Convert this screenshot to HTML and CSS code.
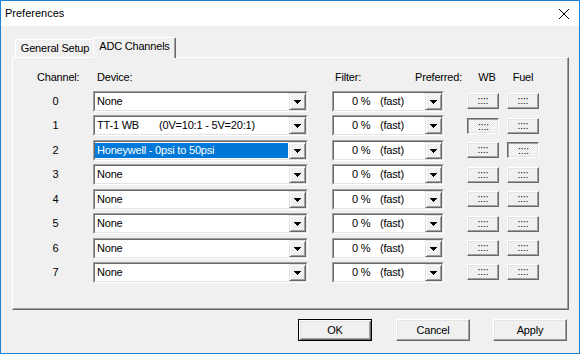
FILE: index.html
```html
<!DOCTYPE html>
<html>
<head>
<meta charset="utf-8">
<link rel="stylesheet" href="styles.css">
</head>
<body>
<div class="window">
  <div class="titlebar">
    <span class="title">Preferences</span>
    <svg class="close" width="10" height="10" viewBox="0 0 10 10"><path d="M0 0L10 10M10 0L0 10" stroke="#000" stroke-width="1"/></svg>
  </div>
  <div class="body">
    <div class="tabs">
      <div class="tab">General Setup</div>
      <div class="tab active">ADC Channels</div>
    </div>
    <div class="panel">
      <div class="grid">
        <div class="hd">Channel:</div>
        <div class="hd dev-hd">Device:</div>
        <div class="hd filt-hd"><span>Filter:</span><span class="pref">Preferred:</span></div>
        <div class="hd ctr">WB</div>
        <div class="hd ctr">Fuel</div>

        <div class="ch">0</div>
        <div class="combo dev"><div class="cin"><div class="val">None</div><div class="dd"><svg width="7" height="4"><path d="M0 0h7v1H0zM1 1h5v1H1zM2 2h3v1H2zM3 3h1v1H3z"/></svg></div></div></div>
        <div class="combo filt"><div class="cin"><div class="val"><span class="pct">0 %</span><span>(fast)</span></div><div class="dd"><svg width="7" height="4"><path d="M0 0h7v1H0zM1 1h5v1H1zM2 2h3v1H2zM3 3h1v1H3z"/></svg></div></div></div>
        <div class="pb">::::</div>
        <div class="pb">::::</div>

        <div class="ch">1</div>
        <div class="combo dev"><div class="cin"><div class="val"><span class="tt">TT-1 WB</span><span>(0V=10:1 - 5V=20:1)</span></div><div class="dd"><svg width="7" height="4"><path d="M0 0h7v1H0zM1 1h5v1H1zM2 2h3v1H2zM3 3h1v1H3z"/></svg></div></div></div>
        <div class="combo filt"><div class="cin"><div class="val"><span class="pct">0 %</span><span>(fast)</span></div><div class="dd"><svg width="7" height="4"><path d="M0 0h7v1H0zM1 1h5v1H1zM2 2h3v1H2zM3 3h1v1H3z"/></svg></div></div></div>
        <div class="pb on">::::</div>
        <div class="pb">::::</div>

        <div class="ch">2</div>
        <div class="combo dev"><div class="cin"><div class="val sel">Honeywell - 0psi to 50psi</div><div class="dd"><svg width="7" height="4"><path d="M0 0h7v1H0zM1 1h5v1H1zM2 2h3v1H2zM3 3h1v1H3z"/></svg></div></div></div>
        <div class="combo filt"><div class="cin"><div class="val"><span class="pct">0 %</span><span>(fast)</span></div><div class="dd"><svg width="7" height="4"><path d="M0 0h7v1H0zM1 1h5v1H1zM2 2h3v1H2zM3 3h1v1H3z"/></svg></div></div></div>
        <div class="pb">::::</div>
        <div class="pb on">::::</div>

        <div class="ch">3</div>
        <div class="combo dev"><div class="cin"><div class="val">None</div><div class="dd"><svg width="7" height="4"><path d="M0 0h7v1H0zM1 1h5v1H1zM2 2h3v1H2zM3 3h1v1H3z"/></svg></div></div></div>
        <div class="combo filt"><div class="cin"><div class="val"><span class="pct">0 %</span><span>(fast)</span></div><div class="dd"><svg width="7" height="4"><path d="M0 0h7v1H0zM1 1h5v1H1zM2 2h3v1H2zM3 3h1v1H3z"/></svg></div></div></div>
        <div class="pb">::::</div>
        <div class="pb">::::</div>

        <div class="ch">4</div>
        <div class="combo dev"><div class="cin"><div class="val">None</div><div class="dd"><svg width="7" height="4"><path d="M0 0h7v1H0zM1 1h5v1H1zM2 2h3v1H2zM3 3h1v1H3z"/></svg></div></div></div>
        <div class="combo filt"><div class="cin"><div class="val"><span class="pct">0 %</span><span>(fast)</span></div><div class="dd"><svg width="7" height="4"><path d="M0 0h7v1H0zM1 1h5v1H1zM2 2h3v1H2zM3 3h1v1H3z"/></svg></div></div></div>
        <div class="pb">::::</div>
        <div class="pb">::::</div>

        <div class="ch">5</div>
        <div class="combo dev"><div class="cin"><div class="val">None</div><div class="dd"><svg width="7" height="4"><path d="M0 0h7v1H0zM1 1h5v1H1zM2 2h3v1H2zM3 3h1v1H3z"/></svg></div></div></div>
        <div class="combo filt"><div class="cin"><div class="val"><span class="pct">0 %</span><span>(fast)</span></div><div class="dd"><svg width="7" height="4"><path d="M0 0h7v1H0zM1 1h5v1H1zM2 2h3v1H2zM3 3h1v1H3z"/></svg></div></div></div>
        <div class="pb">::::</div>
        <div class="pb">::::</div>

        <div class="ch">6</div>
        <div class="combo dev"><div class="cin"><div class="val">None</div><div class="dd"><svg width="7" height="4"><path d="M0 0h7v1H0zM1 1h5v1H1zM2 2h3v1H2zM3 3h1v1H3z"/></svg></div></div></div>
        <div class="combo filt"><div class="cin"><div class="val"><span class="pct">0 %</span><span>(fast)</span></div><div class="dd"><svg width="7" height="4"><path d="M0 0h7v1H0zM1 1h5v1H1zM2 2h3v1H2zM3 3h1v1H3z"/></svg></div></div></div>
        <div class="pb">::::</div>
        <div class="pb">::::</div>

        <div class="ch">7</div>
        <div class="combo dev"><div class="cin"><div class="val">None</div><div class="dd"><svg width="7" height="4"><path d="M0 0h7v1H0zM1 1h5v1H1zM2 2h3v1H2zM3 3h1v1H3z"/></svg></div></div></div>
        <div class="combo filt"><div class="cin"><div class="val"><span class="pct">0 %</span><span>(fast)</span></div><div class="dd"><svg width="7" height="4"><path d="M0 0h7v1H0zM1 1h5v1H1zM2 2h3v1H2zM3 3h1v1H3z"/></svg></div></div></div>
        <div class="pb">::::</div>
        <div class="pb">::::</div>
      </div>
    </div>
    <div class="buttons">
      <div class="btn default">OK</div>
      <div class="btn">Cancel</div>
      <div class="btn">Apply</div>
    </div>
  </div>
</div>
</body>
</html>
```

FILE: styles.css
```css
html, body {
  margin: 0;
  padding: 0;
  background: #fff;
}

body {
  font-family: "Liberation Sans", Arial, sans-serif;
  font-size: 11px;
  line-height: 13px;
  letter-spacing: -0.2px;
  color: #000;
}

.window {
  width: 580px;
  height: 354px;
  box-sizing: border-box;
  border: 1px solid #1883d7;
  background: #f0f0f0;
  display: flex;
  flex-direction: column;
}

.titlebar {
  height: 25px;
  background: #fff;
  display: flex;
  align-items: center;
  padding-left: 4px;
  flex: none;
}

.title {
  letter-spacing: 0;
}

.close {
  margin-left: auto;
  margin-right: 10px;
  display: block;
}

.body {
  padding: 0 10px 0 11px;
  display: flex;
  flex-direction: column;
}

.tabs {
  height: 31px;
  display: flex;
  align-items: flex-end;
  padding-left: 3px;
}

.tab {
  box-sizing: border-box;
  height: 18px;
  width: 80px;
  border-top: 1px solid #fff;
  border-left: 1px solid #fff;
  border-right: 1px solid #696969;
  box-shadow: inset -1px 0 #a0a0a0;
  border-top-left-radius: 2px;
  border-top-right-radius: 2px;
  padding-top: 2px;
  text-align: center;
  background: #f0f0f0;
}

.tab.active {
  width: 83px;
  height: 21px;
  margin-left: -2px;
  margin-bottom: -1px;
  position: relative;
  z-index: 1;
}

.panel {
  box-sizing: border-box;
  height: 253px;
  border: 1px solid;
  border-color: #fff #696969 #696969 #fff;
  box-shadow: inset -1px -1px #a0a0a0;
  padding: 13px 0 0 24px;
}

.grid {
  display: grid;
  grid-template-columns: 56px 239px 135px 40px 32px;
  grid-template-rows: 16.57px repeat(8, 21px);
  row-gap: 3.43px;
  align-items: center;
}

.hd {
  align-self: start;
}

.dev-hd {
  padding-left: 4px;
}

.filt-hd {
  display: flex;
  justify-content: space-between;
  padding-left: 3px;
  padding-right: 5px;
}

.ctr {
  text-align: center;
}

.ch {
  text-align: center;
  padding-right: 19px;
}

.combo {
  box-sizing: border-box;
  height: 21px;
  border: 1px solid;
  border-color: #a0a0a0 #fff #fff #a0a0a0;
  background: #fff;
}

.combo.dev {
  width: 215px;
}

.combo.filt {
  width: 112px;
}

.cin {
  box-sizing: border-box;
  height: 100%;
  border: 1px solid;
  border-color: #696969 #e3e3e3 #e3e3e3 #696969;
  display: flex;
}

.val {
  flex: 1;
  padding-left: 2px;
  line-height: 17px;
  white-space: nowrap;
  overflow: hidden;
  display: flex;
}

.val.sel {
  background: #0078d7;
  color: #fff;
  margin: 1px 1px 1px 0;
  line-height: 15px;
}

.filt .val {
  padding-left: 18px;
}

.pct {
  width: 28px;
  flex: none;
}

.tt {
  width: 62px;
  flex: none;
}

.dd {
  flex: none;
  width: 17px;
  box-sizing: border-box;
  border: 1px solid;
  border-color: #e3e3e3 #696969 #696969 #e3e3e3;
  box-shadow: inset 1px 1px #fff, inset -1px -1px #a0a0a0;
  background: #f0f0f0;
  display: flex;
  align-items: center;
  justify-content: center;
  padding-top: 1px;
}

.dd svg {
  display: block;
}

.pb {
  box-sizing: border-box;
  width: 32px;
  height: 16px;
  border: 1px solid;
  border-color: #fff #696969 #696969 #fff;
  box-shadow: inset -1px -1px #a0a0a0, inset 1px 1px #e3e3e3;
  background: #f0f0f0;
  font-size: 10px;
  line-height: 14px;
  letter-spacing: 0;
  text-align: center;
}

.pb.on {
  border-color: #696969 #fff #fff #696969;
  box-shadow: inset 1px 1px #a0a0a0, inset -1px -1px #e3e3e3;
  background: repeating-conic-gradient(#fff 0 25%, #e6e6e6 0 50%) 0 0 / 2px 2px;
  padding: 1px 0 0 1px;
}

.buttons {
  display: flex;
  justify-content: flex-end;
  gap: 23px;
  margin-top: 9px;
  padding-right: 2px;
}

.btn {
  box-sizing: border-box;
  width: 74px;
  height: 22px;
  border: 1px solid;
  border-color: #fff #696969 #696969 #fff;
  box-shadow: inset -1px -1px #a0a0a0, inset 1px 1px #e3e3e3;
  background: #f0f0f0;
  text-align: center;
  line-height: 20px;
}

.btn.default {
  border-color: #000;
  box-shadow: inset 1px 1px #fff, inset -1px -1px #696969, inset 2px 2px #e3e3e3, inset -2px -2px #a0a0a0;
  margin-right: 1px;
}
```
